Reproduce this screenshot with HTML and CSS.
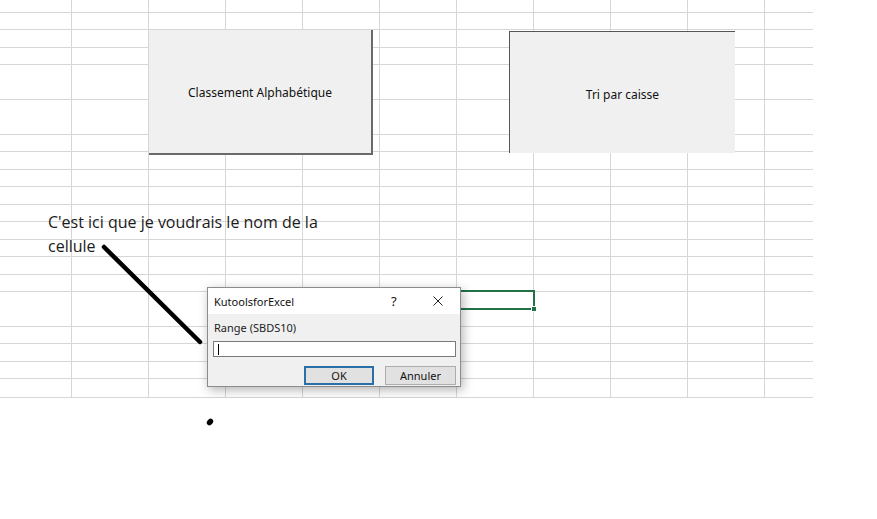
FILE: index.html
```html
<!DOCTYPE html>
<html lang="fr">
<head>
    <meta charset="UTF-8">
    <title>Feuille Excel</title>
    <link rel="stylesheet" href="styles.css">
</head>
<body>
    <div id="feuille">
        <div class="ligne premiere"></div>
        <div class="ligne"></div>
        <div class="ligne x"></div>
        <div class="ligne"></div>
        <div class="ligne double"></div>
        <div class="ligne double"></div>
        <div class="ligne"></div>
        <div class="ligne x"></div>
        <div class="ligne"></div>
        <div class="ligne x"></div>
        <div class="ligne"></div>
        <div class="ligne x"></div>
        <div class="ligne"></div>
        <div class="ligne x"></div>
        <div class="ligne"></div>
        <div class="ligne double"></div>
        <div class="ligne"></div>
        <div class="ligne x"></div>
        <div class="ligne"></div>
        <div class="ligne derniere"></div>

        <div class="forme" id="classement">Classement Alphabétique</div>
        <div class="forme" id="tri">Tri par caisse</div>

        <div id="selection"><span class="poignee"></span></div>

        <div id="note">C'est ici que je voudrais le nom de la<br>cellule</div>

        <div id="dialogue">
            <div class="titre">
                <span class="nom">KutoolsforExcel</span>
                <span class="aide">?</span>
                <span class="fermer">
                    <svg width="10" height="10" viewBox="0 0 10 10">
                        <path d="M0.5 0.5 L9.5 9.5 M9.5 0.5 L0.5 9.5" stroke="#222" stroke-width="1" fill="none"/>
                    </svg>
                </span>
            </div>
            <div class="corps">
                <div class="etiquette">Range (SBDS10)</div>
                <div class="saisie"><span class="curseur"></span></div>
                <div class="boutons">
                    <button class="ok">OK</button>
                    <button>Annuler</button>
                </div>
            </div>
        </div>
    </div>

    <svg id="trait" width="877" height="519" viewBox="0 0 877 519">
        <line x1="104" y1="247" x2="200" y2="342" stroke="#000" stroke-width="4.5" stroke-linecap="round"/>
        <ellipse cx="210" cy="422" rx="3.6" ry="2.8" transform="rotate(-50 210 422)" fill="#000"/>
    </svg>
</body>
</html>
```

FILE: styles.css
```css
body {
    margin: 0;
    padding: 0;
    background: #fff;
    font-family: 'Noto Sans', sans-serif;
    color: #111;
}

#feuille {
    position: relative;
    width: 813px;
    display: flex;
    flex-direction: column;
    background-image: repeating-linear-gradient(to right, transparent 0 76px, #d6d6d6 76px 77px);
    background-position: -5px 0;
}

.ligne {
    box-sizing: border-box;
    height: 17px;
    border-bottom: 1px solid #d6d6d6;
}

.ligne.x { height: 18px; }
.ligne.double { height: 35px; }
.ligne.premiere { height: 13px; }
.ligne.derniere { height: 19px; }

.forme {
    position: absolute;
    display: flex;
    align-items: center;
    justify-content: center;
    background: #f0f0f0;
    font-size: 12px;
    color: #111;
}

#classement {
    left: 149px;
    top: 30px;
    width: 222px;
    height: 122px;
    padding-top: 1px;
    border-right: 2px solid #6a6a6a;
    border-bottom: 2px solid #6a6a6a;
}

#tri {
    left: 509px;
    top: 31px;
    width: 225px;
    height: 117px;
    padding-top: 4px;
    border-left: 1px solid #555;
    border-top: 1px solid #555;
}

#selection {
    position: absolute;
    left: 455px;
    top: 290px;
    width: 76px;
    height: 16px;
    border: 2px solid #217346;
}

.poignee {
    position: absolute;
    right: -4px;
    bottom: -4px;
    width: 4px;
    height: 4px;
    background: #217346;
    border: 1px solid #fff;
}

#note {
    position: absolute;
    left: 48px;
    top: 210px;
    font-family: 'Open Sans', sans-serif;
    font-size: 16px;
    line-height: 24px;
    color: #1a1a1a;
}

#dialogue {
    position: absolute;
    left: 207px;
    top: 287px;
    width: 252px;
    height: 98px;
    border: 1px solid #8c8c8c;
    background: #f0f0f0;
    box-shadow: 2px 3px 10px rgba(0, 0, 0, 0.3);
    font-size: 11px;
    display: flex;
    flex-direction: column;
}

.titre {
    height: 26px;
    background: #fff;
    display: flex;
    align-items: center;
    padding-left: 6px;
}

.titre .nom {
    flex: 1;
    color: #111;
}

.titre .aide {
    font-size: 13px;
    width: 16px;
    margin-right: 26px;
}

.titre .fermer {
    display: flex;
    margin-right: 17px;
}

.corps {
    padding: 6px 4px 0 5px;
    display: flex;
    flex-direction: column;
}

.etiquette {
    height: 16px;
    line-height: 16px;
    padding-left: 1px;
    color: #222;
}

.saisie {
    margin-top: 5px;
    height: 14px;
    background: #fff;
    border: 1px solid #7a7a7a;
    display: flex;
    align-items: center;
    padding-left: 4px;
}

.curseur {
    width: 1px;
    height: 11px;
    background: #000;
}

.boutons {
    display: flex;
    justify-content: flex-end;
    gap: 11px;
    margin-top: 9px;
}

button {
    box-sizing: border-box;
    width: 71px;
    height: 19px;
    padding: 0;
    background: #e1e1e1;
    border: 1px solid #adadad;
    font-family: 'Noto Sans', sans-serif;
    font-size: 11px;
    color: #111;
}

button.ok {
    width: 70px;
    border: 2px solid #2b6fa8;
}

#trait {
    position: absolute;
    left: 0;
    top: 0;
    pointer-events: none;
}
```
